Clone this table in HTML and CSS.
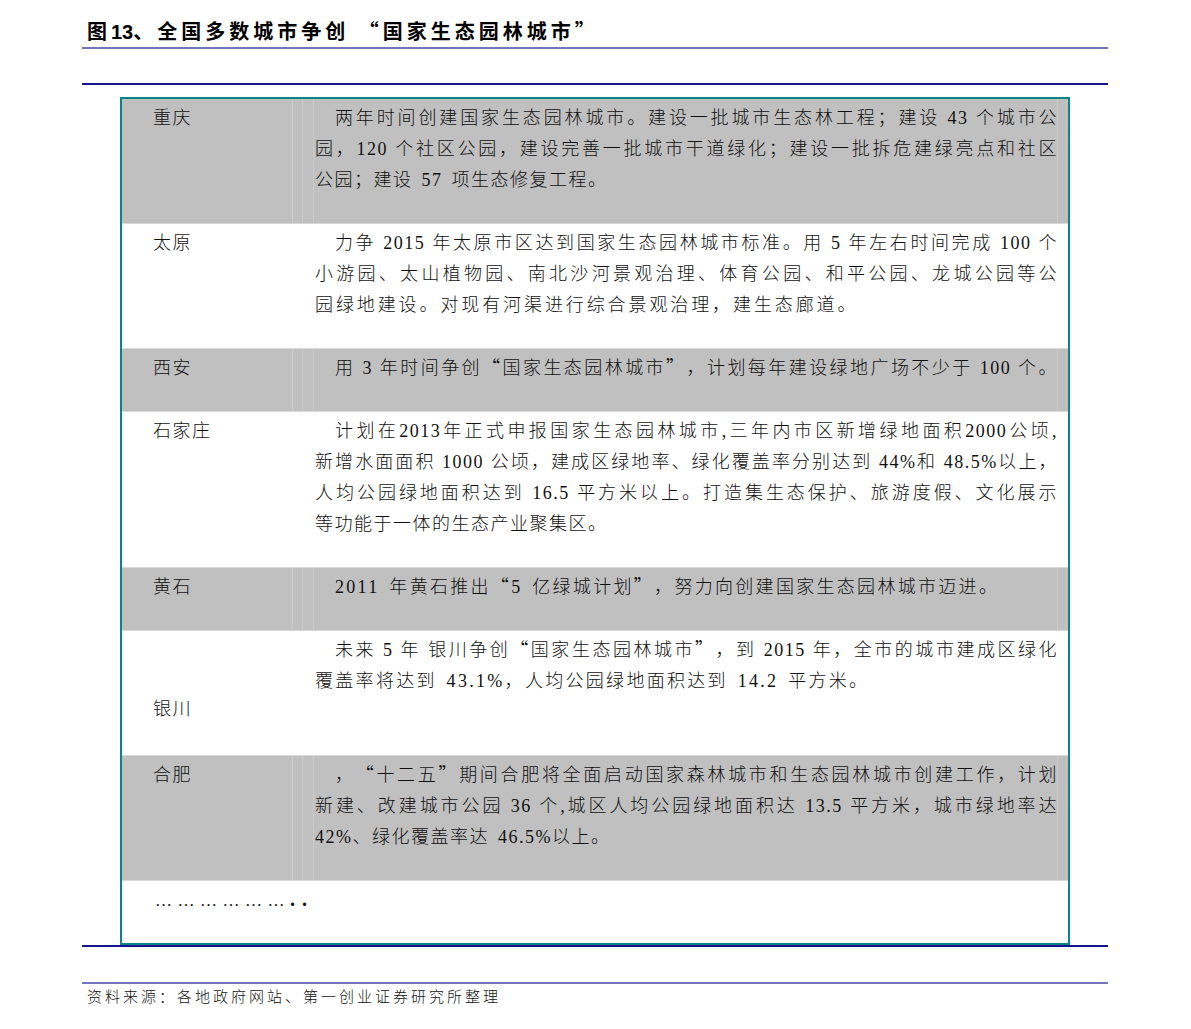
FILE: index.html
```html
<!DOCTYPE html>
<html lang="zh-CN">
<head>
<meta charset="utf-8">
<title>图 13、全国多数城市争创“国家生态园林城市”</title>
<link rel="stylesheet" href="styles.css">
</head>
<body>
<div class="page">
  <h1 class="title">图<span class="num">13</span>、全国多数城市争创 <span class="q">“</span>国家生态园林城市<span class="q">”</span></h1>
  <div class="rule-navy top"></div>

  <div class="table">
    <div class="row gray">
      <div class="city">重庆</div>
      <div class="desc">
        <div class="ln first j">两年时间创建国家生态园林城市。建设一批城市生态林工程；建设 43 个城市公</div>
        <div class="ln j">园，120 个社区公园，建设完善一批城市干道绿化；建设一批拆危建绿亮点和社区</div>
        <div class="ln">公园；建设 57 项生态修复工程。</div>
      </div>
    </div>

    <div class="row white">
      <div class="city">太原</div>
      <div class="desc">
        <div class="ln first j">力争 2015 年太原市区达到国家生态园林城市标准。用 5 年左右时间完成 100 个</div>
        <div class="ln j">小游园、太山植物园、南北沙河景观治理、体育公园、和平公园、龙城公园等公</div>
        <div class="ln wide">园绿地建设。对现有河渠进行综合景观治理，建生态廊道。</div>
      </div>
    </div>

    <div class="row gray">
      <div class="city">西安</div>
      <div class="desc">
        <div class="ln first j">用 3 年时间争创<span class="q">“</span>国家生态园林城市<span class="q">”</span>，计划每年建设绿地广场不少于 100 个。</div>
      </div>
    </div>

    <div class="row white">
      <div class="city">石家庄</div>
      <div class="desc">
        <div class="ln first j">计划在2013年正式申报国家生态园林城市,三年内市区新增绿地面积2000公顷,</div>
        <div class="ln j">新增水面面积 1000 公顷，建成区绿地率、绿化覆盖率分别达到 44%和 48.5%以上，</div>
        <div class="ln j">人均公园绿地面积达到 16.5 平方米以上。打造集生态保护、旅游度假、文化展示</div>
        <div class="ln">等功能于一体的生态产业聚集区。</div>
      </div>
    </div>

    <div class="row gray">
      <div class="city">黄石</div>
      <div class="desc">
        <div class="ln first mid">2011 年黄石推出<span class="q">“</span>5 亿绿城计划<span class="q">”</span>，努力向创建国家生态园林城市迈进。</div>
      </div>
    </div>

    <div class="row white">
      <div class="city low">银川</div>
      <div class="desc">
        <div class="ln first j">未来 5 年 银川争创<span class="q">“</span>国家生态园林城市<span class="q">”</span>，到 2015 年，全市的城市建成区绿化</div>
        <div class="ln mid">覆盖率将达到 43.1%，人均公园绿地面积达到 14.2 平方米。</div>
      </div>
    </div>

    <div class="row gray">
      <div class="city">合肥</div>
      <div class="desc">
        <div class="ln first j">，<span class="q">“</span>十二五<span class="q">”</span>期间合肥将全面启动国家森林城市和生态园林城市创建工作，计划</div>
        <div class="ln j">新建、改建城市公园 36 个,城区人均公园绿地面积达 13.5 平方米，城市绿地率达</div>
        <div class="ln">42%、绿化覆盖率达 46.5%以上。</div>
      </div>
    </div>

    <div class="row white full">
      <div class="dots">………………<span class="big">..</span></div>
    </div>
  </div>

  <div class="rule-navy"></div>
  <div class="rule-purple"></div>
  <p class="source">资料来源：各地政府网站、第一创业证券研究所整理</p>
</div>
</body>
</html>
```

FILE: styles.css
```css
body {
  margin: 0;
  background: #ffffff;
  color: #000000;
}

.page {
  width: 1026px;
  margin-left: 82px;
}

.title {
  margin: 0;
  padding: 20px 0 3px 5px;
  height: 24px;
  font-family: "Liberation Sans", "Noto Sans CJK SC", sans-serif;
  font-weight: bold;
  font-size: 20px;
  line-height: 24px;
  letter-spacing: 4px;
  text-spacing-trim: space-all;
  border-bottom: 2px solid #7474bc;
}

.title .num {
  letter-spacing: 0;
}

.q {
  font-family: "Noto Sans CJK SC", sans-serif;
  font-feature-settings: "fwid";
  line-height: 0;
}

.rule-navy {
  border-top: 2px solid #14148c;
}

.rule-navy.top {
  margin-top: 34px;
}

.table {
  margin: 12px 38px 0;
  border: 2px solid #0a8585;
  font-family: "Liberation Serif", "Noto Sans CJK SC Light", "Noto Sans CJK SC", serif;
  font-weight: normal;
  font-size: 18px;
  line-height: 31px;
  letter-spacing: 1.5px;
  text-spacing-trim: space-all;
  color: #111111;
}

.row {
  display: grid;
  grid-template-columns: 193px 1fr;
}

.row + .row {
  border-top: 1px solid #d8d8d8;
}

.row.full {
  grid-template-columns: 1fr;
}

.gray {
  background: #c0c0c0;
}

.white {
  background: #ffffff;
}

.city {
  padding: 4px 0 27px 31px;
}

.city.low {
  padding-top: 63px;
  padding-bottom: 30px;
}

.desc {
  padding: 4px 10px 27px 0;
}

.gray .city {
  background-image: linear-gradient(to right,
    transparent 170px, #cbcbcb 170px, #cbcbcb 171px, transparent 171px,
    transparent 180px, #cbcbcb 180px, #cbcbcb 181px, transparent 181px,
    transparent 191px, #cbcbcb 191px, #cbcbcb 192px, transparent 192px);
}

.gray .desc {
  background-image: linear-gradient(to left,
    transparent 10px, #cbcbcb 10px, #cbcbcb 11px, transparent 11px);
}

.ln {
  height: 31px;
  word-spacing: 3px;
}

.ln.first {
  text-indent: 20px;
}

.ln.j {
  word-spacing: 0;
  text-align: justify;
  text-align-last: justify;
}

.ln.wide {
  letter-spacing: 2.9px;
}

.ln.mid {
  letter-spacing: 2.3px;
}

.dots {
  padding: 4px 0 27px 33px;
  height: 31px;
  font-family: "Liberation Serif", serif;
  font-weight: normal;
  font-size: 17px;
  letter-spacing: 5.5px;
}

.dots .big {
  font-weight: bold;
  font-size: 20px;
  line-height: 0;
  letter-spacing: 7px;
}

.rule-purple {
  margin-top: 35px;
  border-top: 2px solid #7474bc;
}

.source {
  margin: 0;
  padding: 3px 0 0 5px;
  font-family: "Liberation Serif", "Noto Sans CJK SC Light", "Noto Sans CJK SC", serif;
  font-size: 15px;
  line-height: 20px;
  letter-spacing: 3px;
  text-spacing-trim: space-all;
  color: #111111;
}
```
